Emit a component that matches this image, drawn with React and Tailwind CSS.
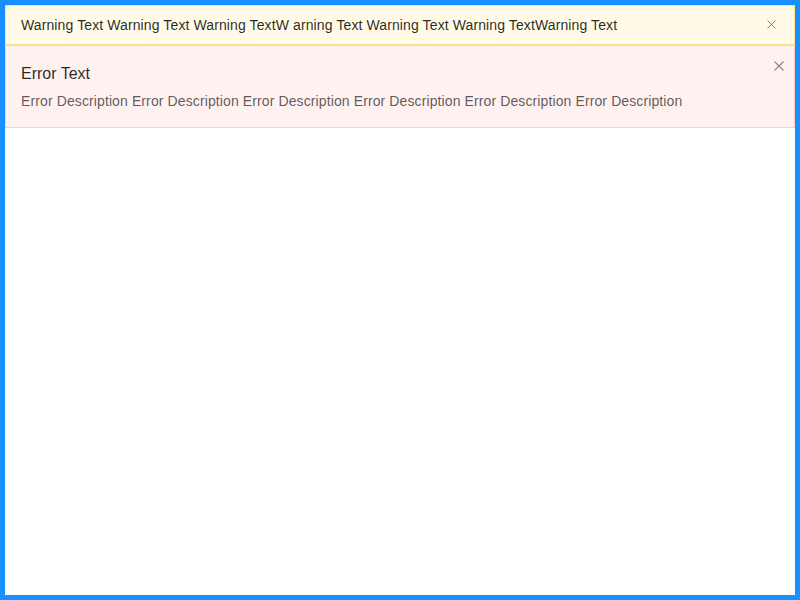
import React, { useState } from 'react';

function CloseIcon({ size }) {
  return (
    <svg width={size} height={size} viewBox="0 0 10 10" fill="none" stroke="currentColor" strokeWidth="1.1">
      <path d="M0.5 0.5 L9.5 9.5 M9.5 0.5 L0.5 9.5" />
    </svg>
  );
}

export default function App() {
  const [showWarning, setShowWarning] = useState(true);
  const [showError, setShowError] = useState(true);

  return (
    <div
      className="h-screen w-full border-[5px] border-[#1890ff] bg-white box-border"
      style={{ fontFamily: '"Liberation Sans", Arial, sans-serif' }}
    >
      {showWarning && (
        <div className="relative flex items-center border border-[#ffe58f] bg-[#fffbe6] px-[15px] py-2 pr-[30px]">
          <span className="text-sm leading-[22px] tracking-[0.11px] text-black/85">
            Warning Text Warning Text Warning TextW arning Text Warning Text Warning TextWarning Text
          </span>
          <button
            onClick={() => setShowWarning(false)}
            className="absolute right-[18px] top-[14px] text-black/45"
          >
            <CloseIcon size={9} />
          </button>
        </div>
      )}
      {showError && (
        <div className="relative border border-[#ffccc7] bg-[#fff1f0] px-[15px] pt-[16px] pb-[15px] pr-[40px]">
          <div className="mb-1 text-base leading-6 text-black/85">Error Text</div>
          <div className="text-sm leading-[22px] tracking-[0.11px] text-black/65">
            Error Description Error Description Error Description Error Description Error Description Error Description
          </div>
          <button
            onClick={() => setShowError(false)}
            className="absolute right-[10px] top-[15px] text-black/45"
          >
            <CloseIcon size={10} />
          </button>
        </div>
      )}
    </div>
  );
}
